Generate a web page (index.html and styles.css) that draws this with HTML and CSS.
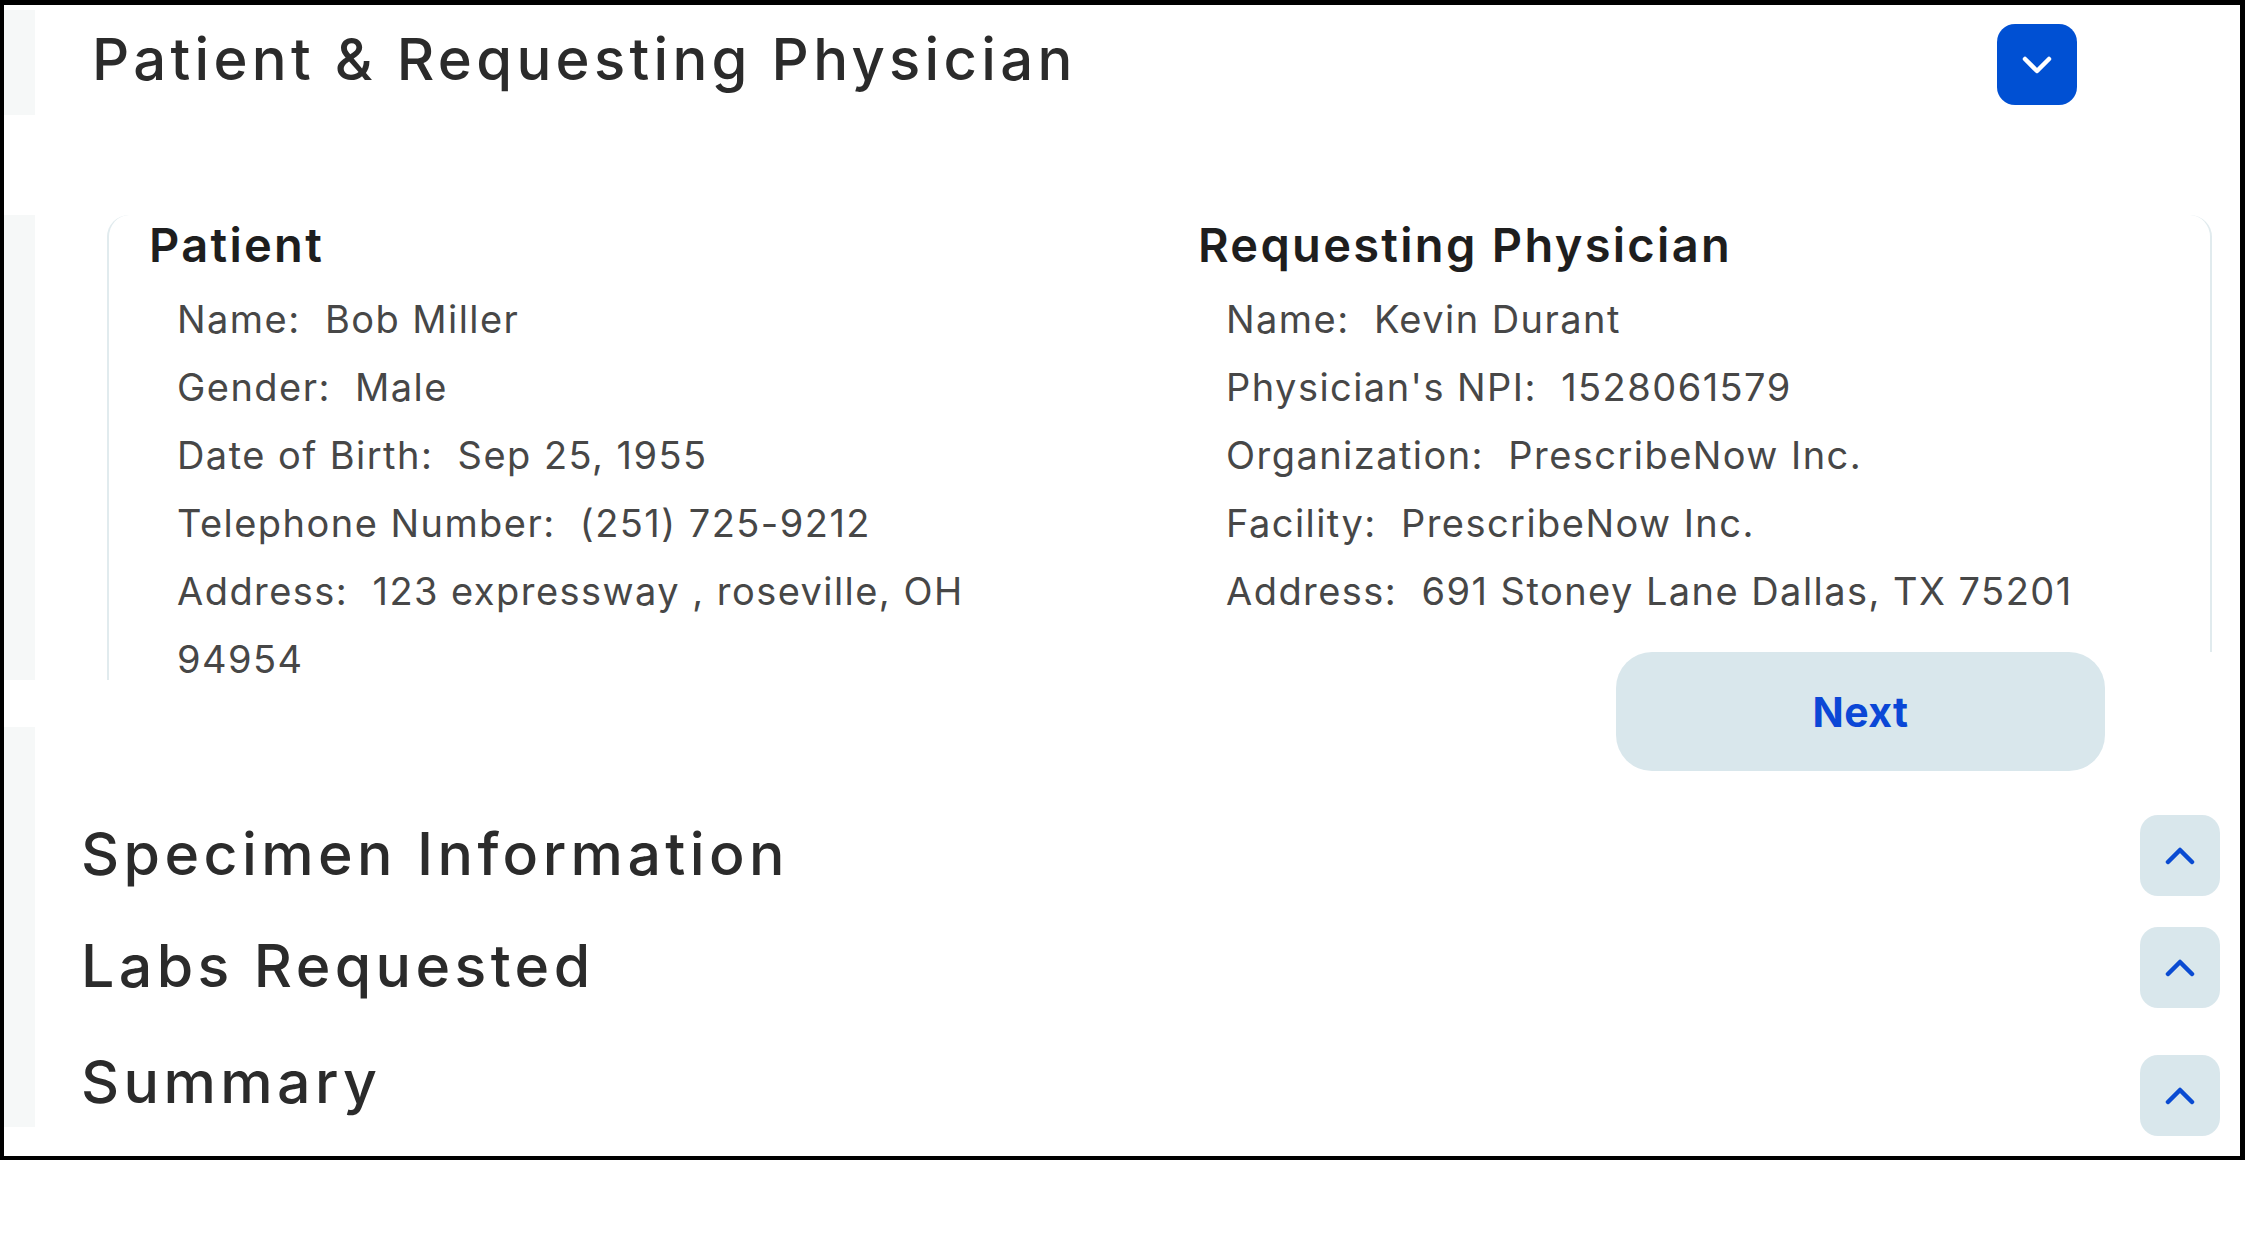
FILE: index.html
```html
<!DOCTYPE html>
<html lang="en">
<head>
<meta charset="utf-8">
<title>Patient &amp; Requesting Physician</title>
<link rel="stylesheet" href="styles.css">
</head>
<body>
<div class="frame">
  <div class="gutter">
    <div class="strip strip-1"></div>
    <div class="strip strip-2"></div>
    <div class="strip strip-3"></div>
  </div>
  <div class="content">
    <div class="header">
      <h1 class="title">Patient &amp; Requesting Physician</h1>
      <button class="btn-toggle btn-primary" aria-label="Collapse">
        <svg width="30" height="18" viewBox="0 0 30 18"><polyline points="3,3 15,15 27,3" fill="none" stroke="#ffffff" stroke-width="4.5" stroke-linecap="round" stroke-linejoin="round"/></svg>
      </button>
    </div>

    <div class="card">
      <div class="col">
        <h2 class="col-title">Patient</h2>
        <ul class="fields">
          <li>Name:&nbsp; Bob Miller</li>
          <li>Gender:&nbsp; Male</li>
          <li>Date of Birth:&nbsp; Sep 25, 1955</li>
          <li>Telephone Number:&nbsp; (251) 725-9212</li>
          <li>Address:&nbsp; 123 expressway , roseville, OH<br>94954</li>
        </ul>
      </div>
      <div class="col">
        <h2 class="col-title">Requesting Physician</h2>
        <ul class="fields">
          <li>Name:&nbsp; Kevin Durant</li>
          <li>Physician's NPI:&nbsp; 1528061579</li>
          <li>Organization:&nbsp; PrescribeNow Inc.</li>
          <li>Facility:&nbsp; PrescribeNow Inc.</li>
          <li>Address:&nbsp; 691 Stoney Lane Dallas, TX 75201</li>
        </ul>
      </div>
    </div>

    <div class="next-row">
      <button class="btn-next">Next</button>
    </div>

    <div class="section sec-1">
      <h2 class="sec-title">Specimen Information</h2>
      <button class="btn-toggle btn-soft" aria-label="Expand">
        <svg width="30" height="18" viewBox="0 0 30 18"><polyline points="3,15 15,3 27,15" fill="none" stroke="#0a4bd2" stroke-width="4.5" stroke-linecap="round" stroke-linejoin="round"/></svg>
      </button>
    </div>
    <div class="section sec-2">
      <h2 class="sec-title">Labs Requested</h2>
      <button class="btn-toggle btn-soft" aria-label="Expand">
        <svg width="30" height="18" viewBox="0 0 30 18"><polyline points="3,15 15,3 27,15" fill="none" stroke="#0a4bd2" stroke-width="4.5" stroke-linecap="round" stroke-linejoin="round"/></svg>
      </button>
    </div>
    <div class="section sec-3">
      <h2 class="sec-title">Summary</h2>
      <button class="btn-toggle btn-soft" aria-label="Expand">
        <svg width="30" height="18" viewBox="0 0 30 18"><polyline points="3,15 15,3 27,15" fill="none" stroke="#0a4bd2" stroke-width="4.5" stroke-linecap="round" stroke-linejoin="round"/></svg>
      </button>
    </div>
  </div>
</div>
</body>
</html>
```
FILE: styles.css
```css
* { box-sizing: border-box; }

html, body {
  margin: 0;
  padding: 0;
  background: #ffffff;
}

body {
  font-family: "Inter", "Open Sans", "Liberation Sans", sans-serif;
  color: #2b2b2b;
  width: 2245px;
  height: 1250px;
  overflow: hidden;
}

.frame {
  width: 2245px;
  height: 1160px;
  border-style: solid;
  border-color: #000000;
  border-width: 5px 5px 4px 4px;
  background: #ffffff;
  display: flex;
}

.gutter {
  width: 31px;
  flex: none;
  display: flex;
  flex-direction: column;
}

.strip { background: #f6f8f8; }
.strip-1 { margin-top: 5px; height: 105px; }
.strip-2 { margin-top: 100px; height: 465px; }
.strip-3 { margin-top: 47px; height: 400px; }

.content {
  flex: 1;
  display: flex;
  flex-direction: column;
  min-width: 0;
}

/* Header */
.header {
  display: flex;
  justify-content: space-between;
  align-items: flex-start;
  padding: 19px 163px 0 57px;
}

.title {
  margin: 0;
  font-size: 58px;
  line-height: 71px;
  font-weight: 500;
  letter-spacing: 4.3px;
  color: #2b2b2b;
  white-space: nowrap;
}

.btn-toggle {
  width: 80px;
  height: 81px;
  border: none;
  border-radius: 18px;
  padding: 0;
  display: flex;
  align-items: center;
  justify-content: center;
  flex: none;
}

.btn-primary { background: #0050d3; }
.btn-soft { background: #d9e7ec; }

/* Card */
.card {
  margin: 110px 28px 0 72px;
  height: 465px;
  border-left: 2px solid #e1ebee;
  border-right: 2px solid #e1ebee;
  border-radius: 22px 22px 0 0;
  padding: 2px 40px 0 40px;
  display: grid;
  grid-template-columns: 1fr 1fr;
  column-gap: 77px;
}

.col-title {
  margin: 0;
  font-size: 47px;
  line-height: 56px;
  font-weight: 600;
  letter-spacing: 2.3px;
  color: #1e1e1e;
  white-space: nowrap;
}

.fields {
  list-style: none;
  margin: 12px 0 0 0;
  padding: 0 0 0 28px;
  font-size: 38px;
  line-height: 68px;
  font-weight: 400;
  letter-spacing: 1.45px;
  color: #474747;
  white-space: nowrap;
}

/* Next */
.next-row {
  position: relative;
  align-self: flex-end;
  width: 625px;
  margin-top: -28px;
  margin-right: 15px;
  padding-left: 16px;
  background: #ffffff;
  display: flex;
}

.btn-next {
  width: 489px;
  height: 119px;
  border: none;
  border-radius: 36px;
  background: #d9e7ec;
  color: #0b47d6;
  font-family: "Inter", "Open Sans", "Liberation Sans", sans-serif;
  font-size: 41px;
  font-weight: 700;
  letter-spacing: 0.5px;
  padding: 0;
}

/* Sections */
.section {
  display: flex;
  justify-content: space-between;
  align-items: flex-start;
  padding: 0 20px 0 46px;
  height: 81px;
}

.sec-1 { margin-top: 44px; }
.sec-2 { margin-top: 31px; }
.sec-3 { margin-top: 47px; }

.sec-title {
  margin: 3px 0 0 0;
  font-size: 59px;
  line-height: 71px;
  font-weight: 500;
  letter-spacing: 4.4px;
  color: #2b2b2b;
  white-space: nowrap;
}

.sec-3 .sec-title { margin-top: -9px; }
```
